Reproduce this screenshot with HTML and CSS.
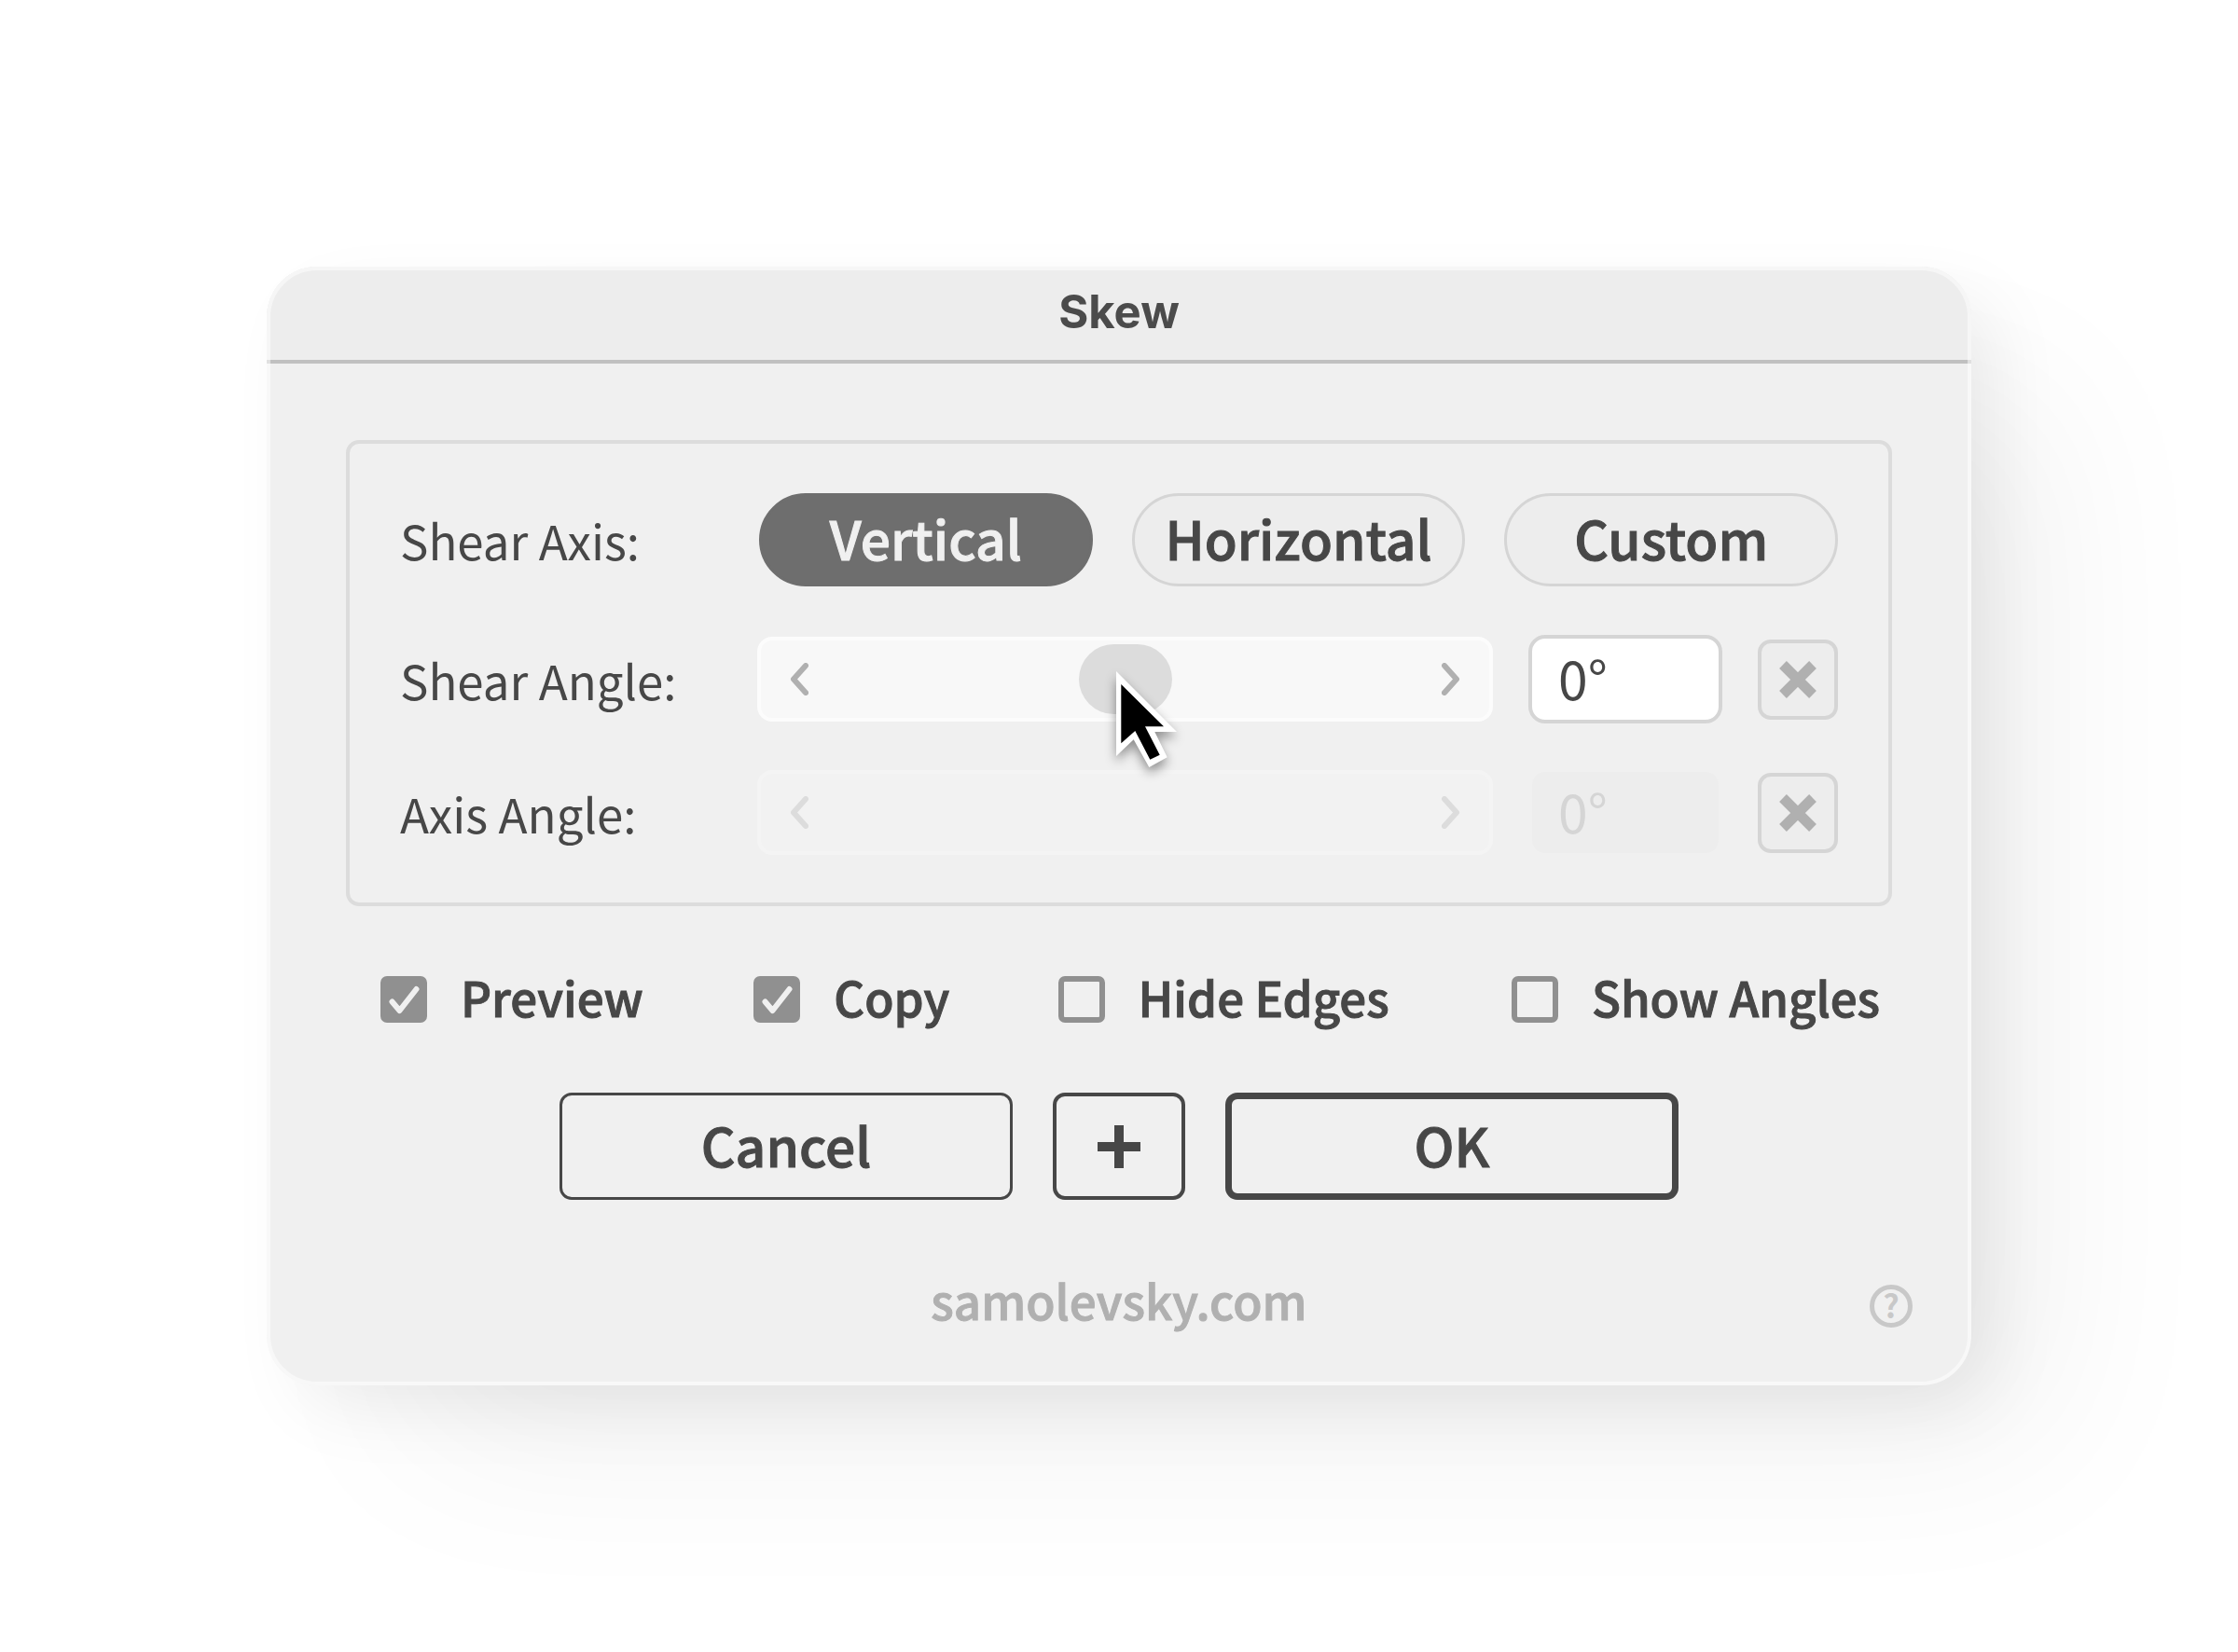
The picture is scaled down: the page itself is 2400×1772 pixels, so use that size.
FILE: index.html
```html
<!DOCTYPE html>
<html lang="en">
<head>
  <meta charset="UTF-8">
  <title>Skew</title>
  <meta name="viewport" content="width=device-width, initial-scale=1">
  <link rel="stylesheet" href="styles.css">
</head>
<body>
  <main class="dialog">
    <header class="titlebar">
      <h1>Skew</h1>
    </header>

    <form class="content">
      <div class="panel">
        <div class="row row-axis">
          <span class="row-label" id="axis-label">Shear Axis:</span>
          <div class="axis-buttons" role="group" aria-labelledby="axis-label">
            <button type="button" class="pill active" aria-pressed="true">Vertical</button>
            <button type="button" class="pill" aria-pressed="false">Horizontal</button>
            <button type="button" class="pill" aria-pressed="false">Custom</button>
          </div>
        </div>

        <div class="row">
          <label class="row-label" for="shear-angle">Shear Angle:</label>
          <div class="slider">
            <button type="button" class="arrow" aria-label="Decrease shear angle">
              <svg width="20" height="35" viewBox="0 0 20 35"><path d="M17 3L4 17.5L17 32"/></svg>
            </button>
            <input type="range" min="-90" max="90" value="0" aria-label="Shear angle slider">
            <button type="button" class="arrow" aria-label="Increase shear angle">
              <svg width="20" height="35" viewBox="0 0 20 35"><path d="M3 3L16 17.5L3 32"/></svg>
            </button>
            <svg class="cursor" width="90" height="130" viewBox="0 0 90 130" aria-hidden="true">
              <path fill="#fff" d="M0 0L65 65H41.3L54.7 92.3L35.3 103L18.7 73.3L0 91Z"/>
              <path fill="#000" d="M5.3 14L51 59.3H31L46.7 89.7L36.3 94.7L20.3 64L5.3 77.3Z"/>
            </svg>
          </div>
          <input type="text" class="angle" id="shear-angle" value="0°">
          <button type="button" class="reset" aria-label="Reset shear angle">
            <svg width="42" height="42" viewBox="0 0 42 42"><path d="M5 5L37 37M37 5L5 37"/></svg>
          </button>
        </div>

        <div class="row">
          <label class="row-label" for="axis-angle">Axis Angle:</label>
          <div class="slider disabled">
            <button type="button" class="arrow" aria-label="Decrease axis angle" disabled>
              <svg width="20" height="35" viewBox="0 0 20 35"><path d="M17 3L4 17.5L17 32"/></svg>
            </button>
            <input type="range" min="-90" max="90" value="0" aria-label="Axis angle slider" disabled>
            <button type="button" class="arrow" aria-label="Increase axis angle" disabled>
              <svg width="20" height="35" viewBox="0 0 20 35"><path d="M3 3L16 17.5L3 32"/></svg>
            </button>
          </div>
          <input type="text" class="angle" id="axis-angle" value="0°" disabled>
          <button type="button" class="reset" aria-label="Reset axis angle">
            <svg width="42" height="42" viewBox="0 0 42 42"><path d="M5 5L37 37M37 5L5 37"/></svg>
          </button>
        </div>
      </div>

      <div class="options">
        <label class="option">
          <span class="box">
            <input type="checkbox" checked>
            <svg width="50" height="50" viewBox="0 0 50 50"><path d="M12.5 27.5L20.5 37L38.5 14"/></svg>
          </span>
          <span class="option-text">Preview</span>
        </label>
        <label class="option">
          <span class="box">
            <input type="checkbox" checked>
            <svg width="50" height="50" viewBox="0 0 50 50"><path d="M12.5 27.5L20.5 37L38.5 14"/></svg>
          </span>
          <span class="option-text">Copy</span>
        </label>
        <label class="option">
          <span class="box">
            <input type="checkbox">
          </span>
          <span class="option-text">Hide Edges</span>
        </label>
        <label class="option">
          <span class="box">
            <input type="checkbox">
          </span>
          <span class="option-text">Show Angles</span>
        </label>
      </div>

      <div class="actions">
        <button type="button" class="btn">Cancel</button>
        <button type="button" class="btn btn-add" aria-label="Add">
          <svg width="46" height="46" viewBox="0 0 46 46"><path d="M23 0V46M0 23H46"/></svg>
        </button>
        <button type="submit" class="btn btn-ok">OK</button>
      </div>
    </form>

    <footer>
      <a href="https://samolevsky.com">samolevsky.com</a>
      <button type="button" class="help" aria-label="Help">?</button>
    </footer>
  </main>
</body>
</html>
```

FILE: styles.css
```css
* {
  box-sizing: border-box;
}

body {
  margin: 0;
  min-height: 100vh;
  padding: 40px;
  display: flex;
  align-items: center;
  justify-content: center;
  background: #fff;
  color: #474747;
  font-family: "Noto Sans CJK JP", "Noto Sans", sans-serif;
  font-size: 51px;
}

button,
input {
  margin: 0;
  padding: 0;
  font-family: inherit;
  font-size: inherit;
  color: inherit;
}

button {
  display: flex;
  align-items: center;
  justify-content: center;
  cursor: pointer;
}

svg {
  fill: none;
  stroke: none;
}

.dialog {
  position: relative;
  width: 100%;
  max-width: 1828px;
  border-radius: 54px;
  background: #f0f0f0;
  box-shadow: 120px 100px 200px -40px rgba(0, 0, 0, 0.06), 30px 30px 80px -10px rgba(0, 0, 0, 0.08);
}

/* light rim over the title bar and body */
.dialog::after {
  content: "";
  position: absolute;
  inset: 0;
  border: 4px solid rgba(255, 255, 255, 0.5);
  border-radius: 54px;
  pointer-events: none;
}

.titlebar {
  height: 104px;
  border-bottom: 4px solid #c0c0c0;
  border-radius: 54px 54px 0 0;
  background: #ededed;
  display: flex;
  align-items: center;
  justify-content: center;
}

.titlebar h1 {
  margin: 0;
  padding-bottom: 2px;
  font-family: Inter, "Liberation Sans", sans-serif;
  font-size: 49px;
  font-weight: 700;
  line-height: 60px;
  color: #4b4b4b;
}

.content {
  padding: 82px 85px 0;
}

.panel {
  display: flex;
  flex-direction: column;
  gap: 48px;
  padding: 49px 54px 49px 54px;
  border: 4px solid #dcdcdc;
  border-radius: 14px;
}

.row {
  display: flex;
  align-items: center;
  gap: 38px;
  height: 95px;
}

.row-axis {
  height: 108px;
  gap: 40px;
}

.row-label {
  flex: 0 0 345px;
  line-height: 60px;
}

.axis-buttons {
  flex: 1;
  display: grid;
  grid-template-columns: repeat(3, 1fr);
  gap: 42px;
}

.pill {
  height: 100px;
  padding-bottom: 7px;
  border: 3px solid #d5d5d5;
  border-radius: 50px;
  background: #ededed;
  font-size: 57px;
}

.pill,
.btn,
.option,
footer a {
  font-weight: 500;
  -webkit-text-stroke: 1px;
}

.pill.active {
  border-color: #6e6e6e;
  background: #6e6e6e;
  color: #f0f0f0;
}

.slider {
  position: relative;
  flex: 1;
  display: flex;
  align-items: center;
  height: 91px;
  padding: 0 31px;
  border: 4px solid #fcfcfc;
  border-radius: 16px;
  background: #f8f8f8;
}

.arrow {
  border: 0;
  background: none;
}

.arrow path {
  stroke: #b0b0b0;
  stroke-width: 6;
  stroke-linecap: round;
  stroke-linejoin: round;
}

.slider input {
  flex: 1;
  min-width: 0;
  height: 75px;
  appearance: none;
  background: none;
}

.slider input::-webkit-slider-thumb {
  appearance: none;
  width: 100px;
  height: 75px;
  border-radius: 38px;
  background: #dcdcdc;
}

.slider.disabled {
  border-color: #f4f4f4;
  background: #f2f2f2;
}

.slider.disabled path {
  stroke: #dcdcdc;
}

.slider.disabled input::-webkit-slider-thumb {
  visibility: hidden;
}

.cursor {
  position: absolute;
  left: calc(50% - 10px);
  top: 33px;
  z-index: 1;
  overflow: visible;
  pointer-events: none;
  filter: drop-shadow(0 6px 6px rgba(0, 0, 0, 0.4));
}

.angle {
  width: 208px;
  height: 95px;
  padding: 0 0 6px 28px;
  border: 4px solid #d5d5d5;
  border-radius: 18px;
  background: #fff;
  font-size: 57px;
}

.angle:disabled {
  border-color: transparent;
  background: #ededed;
  background-clip: padding-box;
  color: #d5d5d5;
}

.reset {
  width: 86px;
  height: 86px;
  border: 4px solid #d5d5d5;
  border-radius: 14px;
  background: #ededed;
}

.reset path {
  stroke: #b0b0b0;
  stroke-width: 11;
}

.options {
  display: grid;
  grid-template-columns: 400fr 326fr 486fr auto;
  margin-top: 75px;
  padding: 0 13px 0 37px;
}

.option {
  display: flex;
  align-items: center;
  gap: 36px;
  height: 50px;
  white-space: nowrap;
}

.option-text {
  padding-bottom: 6px;
  line-height: 50px;
}

.box {
  display: grid;
}

.box input,
.box svg {
  grid-area: 1 / 1;
}

.box input {
  appearance: none;
  width: 50px;
  height: 50px;
  border: 6px solid #909090;
  border-radius: 7px;
}

.box input:checked {
  background: #909090;
}

.box path {
  stroke: #f0f0f0;
  stroke-width: 6;
  stroke-linecap: round;
  stroke-linejoin: round;
}

.actions {
  display: flex;
  justify-content: center;
  gap: 43px;
  margin-top: 75px;
}

.btn {
  width: 486px;
  height: 115px;
  padding-bottom: 6px;
  border: 3px solid #474747;
  border-radius: 13px;
  background: none;
  font-size: 57px;
}

.btn-add {
  width: 142px;
  padding: 0;
  border-width: 4px;
}

.btn-add path {
  stroke: #474747;
  stroke-width: 10;
}

.btn-ok {
  border-width: 7px;
}

footer {
  display: grid;
  grid-template-columns: 1fr auto 1fr;
  padding: 91px 63px 62px;
}

footer a {
  grid-column: 2;
  line-height: 32px;
  color: #b0b0b0;
  text-decoration: none;
}

.help {
  justify-self: end;
  width: 46px;
  height: 46px;
  padding-bottom: 2px;
  border: 5px solid #c8c8c8;
  border-radius: 50%;
  background: none;
  font-size: 34px;
  font-weight: 700;
  line-height: 34px;
  color: #c8c8c8;
}
```
